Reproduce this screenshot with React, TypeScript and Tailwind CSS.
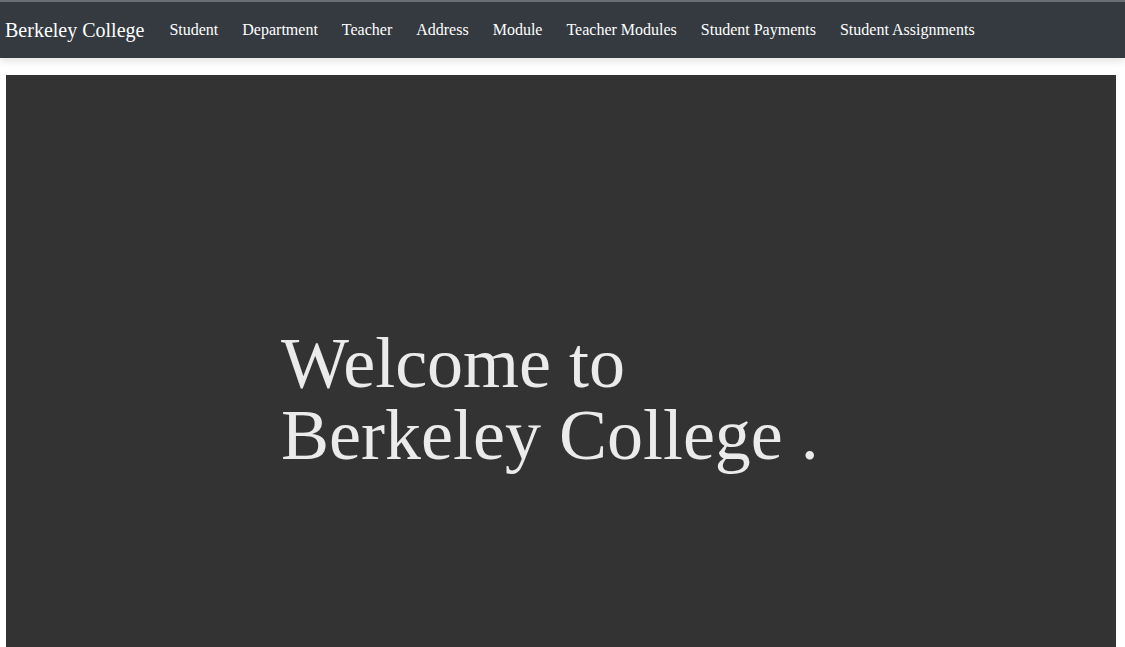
import React from "react";

const links = [
	"Student",
	"Department",
	"Teacher",
	"Address",
	"Module",
	"Teacher Modules",
	"Student Payments",
	"Student Assignments",
];

export default function App() {
	return (
		<div className="min-h-screen bg-white font-['Liberation_Serif','Times_New_Roman',serif]">
			{/* Navbar */}
			<nav className="h-[58px] bg-[#343a40] border-t-2 border-[#6b6e72] shadow-[0_3px_8px_rgba(0,0,0,0.12)] flex items-center pl-[5px] gap-6">
				<span className="text-[20px] text-white leading-none pb-px mr-px">Berkeley College</span>
				{links.map((l) => (
					<a key={l} href="#" className="text-[16px] text-white leading-none">
						{l}
					</a>
				))}
			</nav>

			{/* Hero */}
			<main className="pt-[17px] pl-[6px] pr-[9px]">
				<div className="bg-[#333333] h-[600px] pl-[275px] pt-[252px]">
					<h1 className="text-[72px] leading-[72px] text-[#ebebeb]">
						<span className="block">Welcome to</span>
						<span className="block">Berkeley College .</span>
					</h1>
				</div>
			</main>
		</div>
	);
}
